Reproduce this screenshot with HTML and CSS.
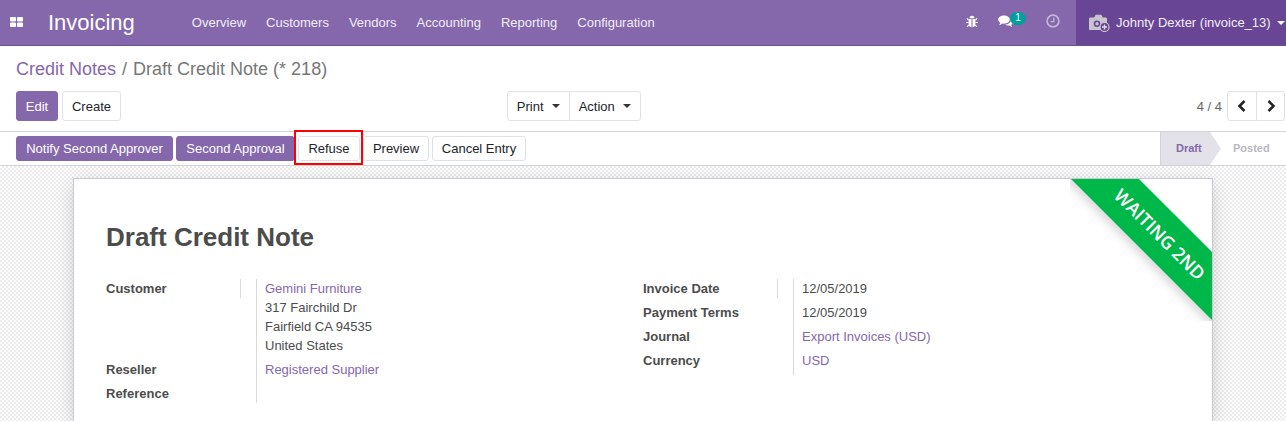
FILE: index.html
```html
<!DOCTYPE html>
<html lang="en">
<head>
    <meta charset="UTF-8">
    <meta name="viewport" content="width=device-width, initial-scale=1.0">
    <title>Draft Credit Note</title>
    <link rel="stylesheet" href="styles.css">
</head>
<body>
    <header class="navbar">
        <a class="apps-icon" href="#">
            <svg width="13" height="10" viewBox="0 0 13 10"><rect x="0" y="0" width="6" height="4.5" rx="1" fill="#fff"/><rect x="7" y="0" width="6" height="4.5" rx="1" fill="#fff"/><rect x="0" y="5.5" width="6" height="4.5" rx="1" fill="#fff"/><rect x="7" y="5.5" width="6" height="4.5" rx="1" fill="#fff"/></svg>
        </a>
        <span class="app-name">Invoicing</span>
        <nav class="menu">
            <a href="#">Overview</a>
            <a href="#">Customers</a>
            <a href="#">Vendors</a>
            <a href="#">Accounting</a>
            <a href="#">Reporting</a>
            <a href="#">Configuration</a>
        </nav>
        <div class="systray">
            <svg class="bug" width="12" height="13" viewBox="0 0 12 13"><path d="M3.500 3.200a2.500 2.500 0 0 1 5 0z" fill="#fff"/><path d="M2.600 4h2.900v8.200C3.800 12 2.600 10.800 2.600 9zM6.500 4h2.900v5c0 1.800-1.200 3-2.900 3.200z" fill="#fff"/><path d="M2.500 5 .8 3.400M9.500 5l1.700-1.600M2.500 7.500H.2M9.500 7.500h2.300M2.800 10 1 11.800M9.200 10l1.800 1.800" stroke="#fff" stroke-width="1.100" fill="none"/></svg>
            <span class="chat">
                <svg width="15" height="13" viewBox="0 0 15 13"><path d="M6 .5c3.200 0 5.800 1.800 5.800 4.100S9.200 8.700 6 8.700c-.5 0-1 0-1.500-.1C3.500 9.500 2.300 10 1 10.200c.7-.8 1.200-1.600 1.300-2.500C1 6.900.2 5.800.2 4.600.2 2.300 2.800.5 6 .5z" fill="#fff"/><path d="M12.800 4.300c1.200.7 2 1.700 2 2.900 0 1-.6 1.900-1.500 2.600.1.800.5 1.500 1.100 2.100-1.100-.2-2.100-.6-2.900-1.400-.4.100-.8.100-1.200.1-1.300 0-2.500-.4-3.400-1 3.500 0 6.300-2.200 5.900-5.300z" fill="#fff"/></svg>
                <span class="badge">1</span>
            </span>
            <svg class="clock" width="14" height="14" viewBox="0 0 14 14"><circle cx="7" cy="7" r="5.900" fill="none" stroke="#c4b6d8" stroke-width="1.700"/><path d="M7.800 3.500v4.200H4.600" fill="none" stroke="#c4b6d8" stroke-width="1.300"/></svg>
        </div>
        <div class="user-menu">
            <svg width="21" height="18" viewBox="0 0 21 18"><path d="M1.500 3.500h3.700L6.700.8h5.600l1.500 2.700h2.700c.8 0 1.500.7 1.500 1.500v9.500c0 .8-.7 1.500-1.500 1.500H1.500C.7 16.500 0 15.800 0 15V5c0-.8.700-1.500 1.500-1.500z" fill="#c9c5cf"/><circle cx="8" cy="9.800" r="3.300" fill="#694595"/><circle cx="8" cy="9.800" r="1.700" fill="#c9c5cf"/><circle cx="15.500" cy="13" r="4.500" fill="#694595" stroke="#c9c5cf" stroke-width="1.200"/><path d="M15.500 10.500v5M13 13h5" stroke="#e4e0ea" stroke-width="1.300"/></svg>
            <span class="user-name">Johnty Dexter (invoice_13)</span>
            <span class="caret caret-light"></span>
        </div>
    </header>

    <section class="control-panel">
        <div class="breadcrumb"><a href="#">Credit Notes</a><span class="crumb-sep">/</span><span>Draft Credit Note (* 218)</span></div>
        <div class="cp-row">
            <div class="cp-buttons">
                <button class="btn btn-primary btn-edit">Edit</button>
                <button class="btn btn-create">Create</button>
            </div>
            <div class="btn-group sidebar-group">
                <button class="btn btn-print">Print <span class="caret"></span></button>
                <button class="btn btn-action">Action <span class="caret"></span></button>
            </div>
            <div class="pager">
                <span class="pager-value">4 / 4</span>
                <div class="btn-group">
                    <button class="btn btn-pager"><svg width="10" height="12" viewBox="0 0 10 12"><path d="M7.500 1 2.500 6l5 5" fill="none" stroke="#212529" stroke-width="2.600"/></svg></button>
                    <button class="btn btn-pager"><svg width="10" height="12" viewBox="0 0 10 12"><path d="M2.500 1l5 5-5 5" fill="none" stroke="#212529" stroke-width="2.600"/></svg></button>
                </div>
            </div>
        </div>
    </section>

    <section class="statusbar">
        <div class="status-buttons">
            <button class="btn-small btn-primary btn-notify">Notify Second Approver</button>
            <button class="btn-small btn-primary btn-approve">Second Approval</button>
            <span class="highlight-wrap">
                <button class="btn-small btn-refuse">Refuse</button>
                <span class="highlight"></span>
            </span>
            <button class="btn-small btn-preview">Preview</button>
            <button class="btn-small btn-cancel">Cancel Entry</button>
        </div>
        <div class="steps">
            <div class="step step-current">Draft</div>
            <div class="step step-next">Posted</div>
        </div>
    </section>

    <main class="sheet-bg">
        <article class="sheet">
            <div class="ribbon-clip"><div class="ribbon">WAITING 2ND</div></div>
            <h1 class="doc-title">Draft Credit Note</h1>
            <div class="groups">
                <div class="group">
                    <div class="label label-mark">Customer</div>
                    <div class="value">
                        <a href="#">Gemini Furniture</a><br>317 Fairchild Dr<br>Fairfield CA 94535<br>United States
                    </div>
                    <div class="label">Reseller</div>
                    <div class="value"><a href="#">Registered Supplier</a></div>
                    <div class="label row-last">Reference</div>
                    <div class="value row-last"></div>
                </div>
                <div class="group">
                    <div class="label label-mark">Invoice Date</div>
                    <div class="value">12/05/2019</div>
                    <div class="label">Payment Terms</div>
                    <div class="value">12/05/2019</div>
                    <div class="label">Journal</div>
                    <div class="value"><a href="#">Export Invoices (USD)</a></div>
                    <div class="label">Currency</div>
                    <div class="value"><a href="#">USD</a></div>
                </div>
            </div>
        </article>
    </main>
</body>
</html>
```
FILE: styles.css
```css
* {
    box-sizing: border-box;
}
html, body {
    height: 100%;
}
body {
    margin: 0;
    display: flex;
    flex-direction: column;
    overflow: hidden;
    font-family: "Liberation Sans", Arial, sans-serif;
    font-size: 13px;
    line-height: 19px;
    color: #4c4c4c;
    background-color: #fff;
}
a {
    color: #8567ac;
    text-decoration: none;
}
button {
    font-family: inherit;
    cursor: pointer;
}

/* navbar */
.navbar {
    display: flex;
    align-items: center;
    flex: none;
    height: 46px;
    background-color: #8567ac;
    border-bottom: 1px solid #6b4f90;
    color: #fff;
}
.apps-icon {
    display: flex;
    margin-left: 10px;
    margin-top: -1px;
}
.app-name {
    margin-left: 25px;
    font-size: 22px;
    line-height: 30px;
}
.menu {
    display: flex;
    margin-left: 47px;
}
.menu a {
    padding: 0 10px;
    color: #f1eef6;
}
.systray {
    display: flex;
    align-items: center;
    margin-left: auto;
}
.bug {
    margin-right: 20px;
    margin-bottom: 2px;
}
.chat {
    position: relative;
    display: flex;
    margin-right: 33px;
    margin-bottom: 2px;
}
.badge {
    position: absolute;
    top: -3px;
    left: 12px;
    width: 16px;
    height: 13px;
    border-radius: 7px;
    background-color: #00a09d;
    color: #fff;
    font-size: 10px;
    line-height: 12px;
    text-align: center;
}
.clock {
    margin-right: 16px;
    margin-bottom: 3px;
}
.user-menu {
    display: flex;
    align-items: center;
    align-self: stretch;
    width: 210px;
    padding-left: 13px;
    background-color: #694595;
    color: #f1eef6;
}
.user-name {
    margin-left: 6px;
}
.caret {
    display: inline-block;
    margin-left: 5px;
    vertical-align: 3px;
    border-top: 4px solid #333;
    border-left: 4px solid transparent;
    border-right: 4px solid transparent;
}
.caret-light {
    margin-left: 6px;
    border-top-color: #fff;
}

/* control panel */
.control-panel {
    flex: none;
    height: 86px;
    padding: 12px 1px 0 16px;
    border-bottom: 1px solid #ced4da;
}
.breadcrumb {
    font-size: 18px;
    line-height: 22px;
    color: #777;
}
.crumb-sep {
    margin: 0 6px;
}
.cp-row {
    display: flex;
    align-items: center;
    margin-top: 11px;
}
.cp-buttons {
    display: flex;
    gap: 4px;
}
.sidebar-group {
    margin-left: 386px;
}
.pager {
    display: flex;
    align-items: center;
    gap: 5px;
    margin-left: auto;
}
.pager-value {
    color: #666;
}
.btn {
    height: 30px;
    padding: 0;
    border: 1px solid #dee2e6;
    border-radius: 3px;
    background-color: #fff;
    color: #212529;
    font-size: 13px;
}
.btn-primary {
    border-color: #8567ac;
    background-color: #8567ac;
    color: #fff;
}
.btn-edit {
    width: 42px;
}
.btn-create {
    width: 59px;
}
.btn-group {
    display: flex;
}
.btn-group .btn:first-child {
    border-radius: 3px 0 0 3px;
}
.btn-group .btn:last-child {
    margin-left: -1px;
    border-radius: 0 3px 3px 0;
}
.btn-print {
    width: 63px;
}
.btn-action {
    width: 72px;
}
.btn-pager {
    display: flex;
    align-items: center;
    justify-content: center;
    width: 30px;
}
.btn-group .btn-pager:last-child {
    width: 29px;
}

/* statusbar */
.statusbar {
    display: flex;
    justify-content: space-between;
    flex: none;
    height: 34px;
    border-bottom: 1px solid #ced4da;
}
.status-buttons {
    display: flex;
    align-items: center;
    gap: 3px;
    padding-left: 16px;
}
.btn-small {
    height: 25px;
    padding: 0;
    border: 1px solid #dee2e6;
    border-radius: 3px;
    background-color: #fff;
    color: #212529;
    font-size: 13px;
}
.btn-small.btn-primary {
    border-color: #8567ac;
    background-color: #8567ac;
    color: #fff;
}
.btn-notify {
    width: 157px;
}
.btn-approve {
    width: 119px;
}
.btn-refuse {
    width: 62px;
}
.btn-preview {
    width: 66px;
}
.btn-cancel {
    width: 94px;
}
.highlight-wrap {
    position: relative;
    display: flex;
}
.highlight {
    position: absolute;
    top: -6px;
    bottom: -4px;
    left: -4px;
    right: -3px;
    border: 2px solid #f00;
}
.steps {
    display: flex;
    width: 126px;
}
.step {
    display: flex;
    align-items: center;
    font-size: 11px;
    font-weight: bold;
}
.step-current {
    width: 61px;
    padding-left: 15px;
    border-left: 1px solid #ced4da;
    background-color: #e2e2e8;
    color: #8567ac;
    clip-path: polygon(0 0, 50px 0, 61px 50%, 50px 100%, 0 100%);
}
.step-next {
    padding-left: 12px;
    color: #b8b8c4;
}

/* form sheet */
.sheet-bg {
    flex: 1;
    padding: 12px 73px 0;
    background-color: #fff;
    background-image: conic-gradient(#ececec 25%, #fff 0 50%, #ececec 0 75%, #fff 0);
    background-size: 4px 4px;
}
.sheet {
    position: relative;
    width: 1140px;
    height: 243px;
    padding: 41px 32px 0;
    background-color: #fff;
    border: 1px solid #c9c9d6;
    border-bottom: 0;
    box-shadow: 0 5px 20px -1px rgba(0, 0, 0, 0.2);
}
.doc-title {
    margin: 0;
    font-size: 26px;
    line-height: 34px;
    color: #4c4c4c;
}
.ribbon-clip {
    position: absolute;
    top: 0;
    right: 0;
    width: 142px;
    height: 142px;
    overflow: hidden;
}
.ribbon {
    position: absolute;
    top: 30px;
    right: -57px;
    width: 220px;
    height: 48px;
    padding-left: 3px;
    background-color: #00b74a;
    box-shadow: 0 5px 10px rgba(0, 0, 0, 0.15);
    color: #fff;
    font-family: "Open Sans", sans-serif;
    font-size: 18px;
    font-weight: 600;
    line-height: 48px;
    text-align: center;
    transform: rotate(45deg);
}
.groups {
    display: grid;
    grid-template-columns: 537px 1fr;
    margin-top: 25px;
}
.group {
    display: grid;
    grid-template-columns: 150px 1fr;
    align-content: start;
}
.label {
    padding-bottom: 5px;
    font-weight: bold;
}
.label-mark {
    position: relative;
}
.label-mark::after {
    content: "";
    position: absolute;
    top: 0;
    right: 15px;
    width: 1px;
    height: 19px;
    background-color: #d9d9d9;
}
.value {
    padding: 0 0 5px 8px;
    border-left: 1px solid #d9d9d9;
}
.group .row-last {
    padding-bottom: 0;
}
```
